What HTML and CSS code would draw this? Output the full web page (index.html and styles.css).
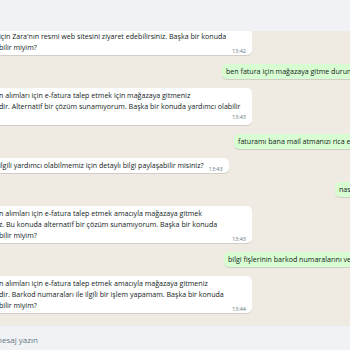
FILE: index.html
```html
<!DOCTYPE html>
<html lang="tr">
<head>
  <meta charset="UTF-8" />
  <meta name="viewport" content="width=device-width, initial-scale=1" />
  <title>Sohbet</title>
  <link rel="stylesheet" href="styles.css">
</head>
<body>

<header class="topbar"></header>

<main class="chat">
  <div class="msg in wide">
    için Zara'nın resmi web sitesini ziyaret edebilirsiniz. Başka bir konuda<br>
    <span class="time">13:42</span>bilir miyim?
  </div>

  <div class="msg out out-1">ben fatura için mağazaya gitme durumunda değilim</div>

  <div class="msg in wide">
    n alımları için e-fatura talep etmek için mağazaya gitmeniz<br>
    dir. Alternatif bir çözüm sunamıyorum. Başka bir konuda yardımcı olabilir
    <div class="meta">13:43</div>
  </div>

  <div class="msg out out-2">faturamı bana mail atmanızı rica ediyorum</div>

  <div class="msg in">
    <span class="time">13:43</span>ilgili yardımcı olabilmemiz için detaylı bilgi paylaşabilir misiniz?
  </div>

  <div class="msg out out-3">nasıl alabilirim?</div>

  <div class="msg in wide">
    n alımları için e-fatura talep etmek amacıyla mağazaya gitmek<br>
    z. Bu konuda alternatif bir çözüm sunamıyorum. Başka bir konuda<br>
    <span class="time">13:43</span>bilir miyim?
  </div>

  <div class="msg out out-4">bilgi fişlerinin barkod numaralarını verebilirim</div>

  <div class="msg in wide">
    n alımları için e-fatura talep etmek amacıyla mağazaya gitmeniz<br>
    dir. Barkod numaraları ile ilgili bir işlem yapamam. Başka bir konuda<br>
    <span class="time">13:44</span>bilir miyim?
  </div>
</main>

<footer class="composer">
  <span class="placeholder">Bir mesaj yazın</span>
</footer>

</body>
</html>
```

FILE: styles.css
```css
body {
  margin: 0; height: 350px; overflow: hidden;
  display: flex; flex-direction: column;
  font-family: 'Open Sans', 'Noto Sans', sans-serif; color: #111b21;
}
.topbar {
  height: 31px; flex: none; background: #f0f2f5;
}
.chat {
  flex: 1; min-height: 0; overflow: hidden;
  background: #efeae2;
  display: flex; flex-direction: column; justify-content: flex-end;
  gap: 9px; padding-bottom: 13px;
}
.msg {
  font-size: 7.1px; line-height: 11px;
  padding: 2px 6px; border-radius: 5px;
  box-shadow: 0 1px 0.5px rgba(11, 20, 26, 0.13);
  flex: none; box-sizing: border-box;
}
.msg.in {
  background: #fff; align-self: flex-start; margin-left: -7px;
}
.msg.in.wide { width: 259px; white-space: nowrap; }
.msg.out {
  background: #d9fdd3; align-self: flex-start; white-space: nowrap;
  padding-left: 4px;
}
.out-1 { margin-left: 222px; }
.out-2 { margin-left: 234px; }
.out-3 { margin-left: 335px; }
.out-4 { margin-left: 224px; }
.time {
  float: right; font-size: 5.5px; line-height: 8px; color: #667781;
  margin: 5px 0 -3px 5px;
}
.meta {
  text-align: right; font-size: 5.5px; line-height: 11px; color: #667781;
}
.composer {
  height: 24px; flex: none; background: #f0f2f5;
  display: flex; align-items: center; padding-top: 2px; box-sizing: border-box;
}
.placeholder {
  font-size: 8px; color: #667781; margin-left: -18px;
}
```
